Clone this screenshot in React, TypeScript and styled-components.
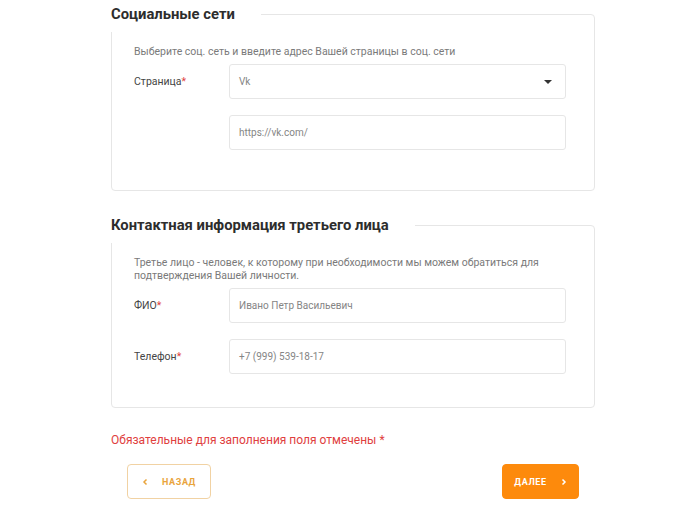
import React from 'react';
import styled, { createGlobalStyle } from 'styled-components';

const GlobalStyle = createGlobalStyle`
  body {
    margin: 0;
    background: #ffffff;
    font-family: Roboto, "Liberation Sans", sans-serif;
  }
`;

const Page = styled.div`
  width: 484px;
  margin-left: 111px;
  padding-top: 14px;
`;

const Card = styled.section<{ gap?: number; bottom?: number }>`
  border: 1px solid #e6e6e6;
  border-radius: 4px;
  margin-top: ${p => p.gap || 0}px;
  padding: 0 28px ${p => p.bottom || 36}px 22px;
`;

const Heading = styled.h2`
  display: block;
  width: fit-content;
  margin: -15px 0 0 -23px;
  padding: 0 26px 4px 0;
  background: #ffffff;
  font-size: 14.8px;
  line-height: 28px;
  font-weight: 700;
  color: #2d2d2d;
`;

const Hint = styled.p`
  margin: 13px 0 6px;
  font-size: 10.5px;
  line-height: 13px;
  color: #7a7a7a;
`;

const Row = styled.div`
  display: grid;
  grid-template-columns: 95px 337px;
  align-items: center;
  & + & {
    margin-top: 16px;
  }
`;

const Label = styled.span`
  font-size: 10.5px;
  color: #444;
  & b {
    color: #e0403e;
    font-weight: 400;
  }
`;

const Field = styled.div`
  height: 35px;
  box-sizing: border-box;
  border: 1px solid #e6e6e6;
  border-radius: 3px;
  display: flex;
  align-items: center;
  justify-content: space-between;
  padding: 0 13px 0 9px;
  font-size: 10px;
  color: #858585;
`;

const Caret = styled.span`
  width: 0;
  height: 0;
  border-left: 4px solid transparent;
  border-right: 4px solid transparent;
  border-top: 4px solid #333;
`;

const Required = styled.p`
  margin: 24px 0 16px;
  font-size: 12px;
  line-height: 16px;
  color: #e0403e;
`;

const Actions = styled.div`
  display: flex;
  justify-content: space-between;
  padding: 0 16px;
`;

const Button = styled.button<{ primary?: boolean; w: number }>`
  width: ${p => p.w}px;
  height: 35px;
  box-sizing: border-box;
  border-radius: 4px;
  border: 1px solid ${p => (p.primary ? '#fd8a0c' : '#f1d2a3')};
  background: ${p => (p.primary ? '#fd8a0c' : '#ffffff')};
  color: ${p => (p.primary ? '#ffffff' : '#e9a43c')};
  font-family: Roboto, "Liberation Sans", sans-serif;
  font-size: 9px;
  font-weight: 700;
  letter-spacing: 0.6px;
  display: flex;
  align-items: center;
  justify-content: center;
  gap: 14px;
  padding: 0;
  cursor: pointer;
`;

const Chevron = ({ dir }: { dir: 'left' | 'right' }) => (
  <svg width="6" height="8" viewBox="0 0 6 8">
    <path
      d={dir === 'left' ? 'M4.5 1.5 L2 4 L4.5 6.5' : 'M1.5 1.5 L4 4 L1.5 6.5'}
      fill="none"
      stroke="currentColor"
      strokeWidth="1.5"
    />
  </svg>
);

export default function App() {
  return (
    <>
      <GlobalStyle />
      <Page>
        <Card bottom={40}>
          <Heading>Социальные сети</Heading>
          <Hint>Выберите соц. сеть и введите адрес Вашей страницы в соц. сети</Hint>
          <Row>
            <Label>Страница<b>*</b></Label>
            <Field>
              Vk
              <Caret />
            </Field>
          </Row>
          <Row>
            <span />
            <Field>https://vk.com/</Field>
          </Row>
        </Card>

        <Card gap={34} bottom={33}>
          <Heading>Контактная информация третьего лица</Heading>
          <Hint>
            Третье лицо - человек, к которому при необходимости мы можем обратиться для
            подтверждения Вашей личности.
          </Hint>
          <Row>
            <Label>ФИО<b>*</b></Label>
            <Field>Ивано Петр Васильевич</Field>
          </Row>
          <Row>
            <Label>Телефон<b>*</b></Label>
            <Field>+7 (999) 539-18-17</Field>
          </Row>
        </Card>

        <Required>Обязательные для заполнения поля отмечены *</Required>
        <Actions>
          <Button w={84}>
            <Chevron dir="left" />
            НАЗАД
          </Button>
          <Button primary w={77}>
            ДАЛЕЕ
            <Chevron dir="right" />
          </Button>
        </Actions>
      </Page>
    </>
  );
}
